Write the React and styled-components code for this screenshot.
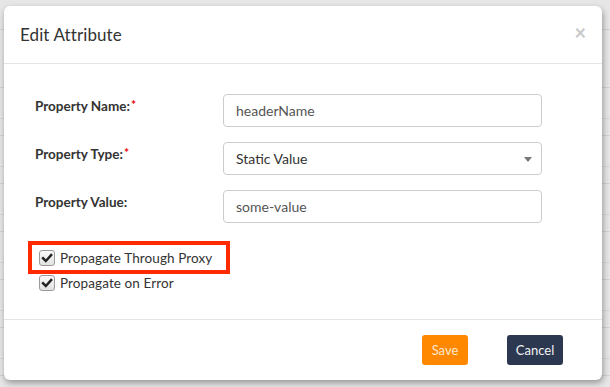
import React from "react";
import styled, { createGlobalStyle } from "styled-components";

const GlobalStyle = createGlobalStyle`
  html, body {
    margin: 0;
    padding: 0;
    background: #e6e6e6;
  }
  * {
    box-sizing: border-box;
  }
`;

const Page = styled.div`
  position: relative;
  width: 610px;
  height: 387px;
  overflow: hidden;
  background: #e6e6e6;
  font-family: Lato, "Open Sans", sans-serif;
`;

// faded table rows behind the backdrop
const BackTable = styled.div`
  display: flex;
  flex-direction: column;
`;

const BackHead = styled.div`
  height: 87px;
  display: flex;
  flex-direction: column;
  & > div {
    height: 30px;
    border-bottom: 1px solid #d2d2d2;
  }
`;

const BackRow = styled.div`
  height: 48px;
  border-top: 1px solid #d2d2d2;
  & > div {
    height: 31px;
    border-bottom: 1px solid #d8d8d8;
  }
`;

const Modal = styled.div`
  position: absolute;
  left: 4px;
  top: 6px;
  width: 598px;
  height: 374px;
  background: #fff;
  border-radius: 6px;
  box-shadow: 1px 3px 6px rgba(0, 0, 0, 0.35);
  display: flex;
  flex-direction: column;
`;

const Header = styled.div`
  height: 58px;
  padding: 0 16px;
  display: flex;
  align-items: center;
  justify-content: space-between;
  border-bottom: 1px solid #e5e5e5;
`;

const Title = styled.h4`
  margin: 0;
  font-size: 17px;
  font-weight: 400;
  color: #333;
  letter-spacing: 0.1px;
`;

const Close = styled.span`
  font-size: 20px;
  font-weight: 700;
  color: #c8c8c8;
  line-height: 1;
  margin-top: -6px;
`;

const Body = styled.div`
  flex: 1;
  padding: 30px 60px 0 31px;
`;

const FormRow = styled.div`
  display: grid;
  grid-template-columns: 188px 1fr;
  align-items: start;
  margin-bottom: 15px;
`;

const Label = styled.label`
  padding-top: 4px;
  font-size: 13.5px;
  font-weight: 700;
  color: #333;
`;

const Required = styled.span`
  color: #e00;
  font-size: 12px;
  vertical-align: top;
  position: relative;
  top: -1px;
  margin-left: 1px;
`;

const Field = styled.div`
  position: relative;
  height: 33px;
  border: 1px solid #ccc;
  border-radius: 4px;
  padding: 0 12px;
  display: flex;
  align-items: center;
  font-size: 14px;
  color: ${(p) => (p.$dark ? "#333" : "#555")};
`;

const Caret = styled.span`
  position: absolute;
  right: 9px;
  top: 14px;
  width: 0;
  height: 0;
  border-left: 4px solid transparent;
  border-right: 4px solid transparent;
  border-top: 5px solid #777;
`;

const Checks = styled.div`
  display: flex;
  flex-direction: column;
  align-items: flex-start;
  padding-left: 4px;
  margin-top: 22px;
`;

const CheckRow = styled.label`
  position: relative;
  height: 25px;
  display: inline-flex;
  align-items: center;
  gap: 5px;
  font-size: 13.5px;
  color: #333;
  letter-spacing: 0.1px;
  &::after {
    content: "";
    display: ${(p) => (p.$marked ? "block" : "none")};
    position: absolute;
    top: -4px;
    left: -11px;
    right: -18px;
    bottom: -4px;
    border: 4px solid #ff2a00;
  }
`;

const Box = styled.span`
  width: 16px;
  height: 16px;
  border: 1px solid #9a9a9a;
  border-radius: 3px;
  background: linear-gradient(#fafafa, #e2e2e2);
  display: flex;
  align-items: center;
  justify-content: center;
`;

const Footer = styled.div`
  height: 61px;
  border-top: 1px solid #e5e5e5;
  display: flex;
  justify-content: flex-end;
  align-items: flex-start;
  gap: 39px;
  padding: 15px 39px 0 0;
`;

const Button = styled.button`
  height: 30px;
  width: ${(p) => (p.$primary ? "46px" : "56px")};
  padding: 0;
  border: none;
  border-radius: 3px;
  font-family: Lato, "Open Sans", sans-serif;
  font-size: 13px;
  color: ${(p) => (p.$primary ? "#fde7cf" : "#f2f2f2")};
  background: ${(p) => (p.$primary ? "#ff8800" : "#2c3750")};
`;

const Check = () => (
  <Box>
    <svg width="12" height="12" viewBox="0 0 12 12">
      <path
        d="M2 6.2 L4.8 9 L10.2 3"
        fill="none"
        stroke="#222"
        strokeWidth="2.4"
        strokeLinecap="square"
      />
    </svg>
  </Box>
);

export default function App() {
  const rows = [0, 1, 1, 1, 1, 1, 1];
  return (
    <>
      <GlobalStyle />
      <Page>
        <BackTable>
          <BackHead>
            <div />
          </BackHead>
          {rows.map((r, i) => (
            <BackRow key={i}>
              <div />
            </BackRow>
          ))}
        </BackTable>

        <Modal>
          <Header>
            <Title>Edit Attribute</Title>
            <Close>×</Close>
          </Header>
          <Body>
            <FormRow>
              <Label>
                Property Name:<Required>*</Required>
              </Label>
              <Field>headerName</Field>
            </FormRow>
            <FormRow>
              <Label>
                Property Type:<Required>*</Required>
              </Label>
              <Field $dark>
                Static Value
                <Caret />
              </Field>
            </FormRow>
            <FormRow>
              <Label>Property Value:</Label>
              <Field>some-value</Field>
            </FormRow>
            <Checks>
              <CheckRow $marked>
                <Check />
                Propagate Through Proxy
              </CheckRow>
              <CheckRow>
                <Check />
                Propagate on Error
              </CheckRow>
            </Checks>
          </Body>
          <Footer>
            <Button $primary>Save</Button>
            <Button>Cancel</Button>
          </Footer>
        </Modal>
      </Page>
    </>
  );
}
